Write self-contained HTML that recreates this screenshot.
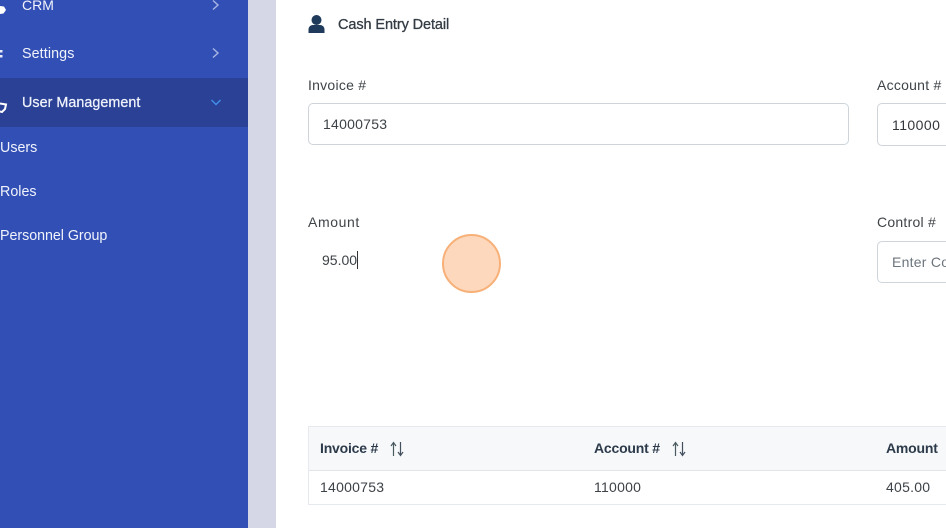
<!DOCTYPE html>
<html>
<head>
<meta charset="utf-8">
<style>
html,body{margin:0;padding:0;width:946px;height:528px;overflow:hidden;background:#fff;font-family:"Liberation Sans",sans-serif;}
.a{position:absolute;white-space:nowrap;line-height:20px;}
.b{position:absolute;box-sizing:border-box;}
.nav{color:#f0f3fb;font-size:14.3px;}
.lab{color:#3f4448;font-size:14px;letter-spacing:.25px;}
.val{color:#3d4247;font-size:14px;letter-spacing:.25px;}
.th{color:#2c3a4a;font-size:14px;font-weight:bold;letter-spacing:-.2px;}
</style>
</head>
<body>
<div class="b" style="left:0;top:0;width:248px;height:528px;background:#324fb5"></div>
<div class="b" style="left:0;top:78px;width:248px;height:49px;background:#2a4196"></div>
<div class="b" style="left:248px;top:0;width:28px;height:528px;background:#d6d7e6"></div>

<div class="a nav" style="left:22px;top:-5px;font-size:14px">CRM</div>
<div class="a nav" style="left:22px;top:44px;letter-spacing:.1px">Settings</div>
<div class="a nav" style="left:22px;top:93px;letter-spacing:.05px;-webkit-text-stroke:.25px #f0f3fb">User Management</div>
<div class="a nav" style="left:0;top:138px">Users</div>
<div class="a nav" style="left:0;top:182px">Roles</div>
<div class="a nav" style="left:0;top:226px;letter-spacing:-.05px">Personnel Group</div>

<svg class="b" style="left:0;top:0" width="248" height="127" viewBox="0 0 248 127">
<path d="M213 0.5L218 5L213 9.5" fill="none" stroke="#a9b6e2" stroke-width="1.4"/>
<path d="M213 48.5L218 53L213 57.500" fill="none" stroke="#a9b6e2" stroke-width="1.4"/>
<path d="M211.500 100L216 104.500L220.500 100" fill="none" stroke="#3f8fe8" stroke-width="1.4"/>
<path d="M0 6L4 6.500L6 10L3.500 13.500L0 14Z" fill="#fff"/>
<path d="M0 50H2.500V52.500H0ZM0 55H2.500V57.500H0Z" fill="#e8ecf8"/>
<path d="M0 103.500L6 104.500L5 109L2 112L0 111.500" fill="none" stroke="#fff" stroke-width="2"/>
</svg>

<svg class="b" style="left:308px;top:15px" width="18" height="20" viewBox="0 0 18 20">
<circle cx="8.500" cy="5" r="5" fill="#1f3a5a"/>
<path d="M0.500 18V14.500C0.500 11.500 3 10 5 10H12C14 10 16.500 11.500 16.500 14.500V18Z" fill="#1f3a5a"/>
</svg>
<div class="a" style="left:338px;top:15px;color:#333b44;font-size:14.5px;letter-spacing:-.1px;-webkit-text-stroke:.3px #333b44">Cash Entry Detail</div>

<div class="a lab" style="left:308px;top:75px">Invoice #</div>
<div class="b" style="left:308px;top:103px;width:541px;height:42px;border:1px solid #ced4da;border-radius:5px;background:#fff"></div>
<div class="a val" style="left:323px;top:114px">14000753</div>

<div class="a lab" style="left:877px;top:75px">Account #</div>
<div class="b" style="left:877px;top:103px;width:100px;height:43px;border:1px solid #ced4da;border-radius:5px;background:#fff"></div>
<div class="a val" style="left:892px;top:115px;color:#33373b;letter-spacing:.45px">110000</div>

<div class="a lab" style="left:308px;top:212px;letter-spacing:.6px">Amount</div>
<div class="a val" style="left:322px;top:250px;letter-spacing:0">95.00</div>
<div class="b" style="left:357px;top:251px;width:1px;height:18px;background:#333"></div>

<div class="a lab" style="left:877px;top:212px">Control #</div>
<div class="b" style="left:877px;top:241px;width:100px;height:42px;border:1px solid #ced4da;border-radius:5px;background:#fff"></div>
<div class="a val" style="left:892px;top:252px;color:#6c757d">Enter Control</div>

<div class="b" style="left:442px;top:234px;width:59px;height:59px;border-radius:50%;background:#fdd8bc;border:2px solid #f7b077"></div>

<div class="b" style="left:308px;top:426px;width:660px;height:79px;border:1px solid #e6e9ee;background:#fff"></div>
<div class="b" style="left:309px;top:427px;width:660px;height:44px;background:#f6f8fa;border-bottom:1px solid #e1e5ea"></div>
<div class="a th" style="left:320px;top:438px">Invoice #</div>
<div class="a th" style="left:594px;top:438px">Account #</div>
<div class="a th" style="left:886px;top:438px">Amount</div>
<svg class="b" style="left:389px;top:441px" width="17" height="16" viewBox="0 0 17 16">
<path d="M4.500 15V2M2 5L4.500 1.500L7 5" fill="none" stroke="#4a5b60" stroke-width="1.200"/>
<path d="M11.500 1V14M9 11L11.500 14.500L14 11" fill="none" stroke="#44505e" stroke-width="1.200"/>
</svg>
<svg class="b" style="left:671px;top:441px" width="17" height="16" viewBox="0 0 17 16">
<path d="M4.500 15V2M2 5L4.500 1.500L7 5" fill="none" stroke="#4a5b60" stroke-width="1.200"/>
<path d="M11.500 1V14M9 11L11.500 14.500L14 11" fill="none" stroke="#44505e" stroke-width="1.200"/>
</svg>
<div class="a val" style="left:320px;top:477px">14000753</div>
<div class="a val" style="left:594px;top:477px">110000</div>
<div class="a val" style="left:886px;top:477px">405.00</div>
</body>
</html>
